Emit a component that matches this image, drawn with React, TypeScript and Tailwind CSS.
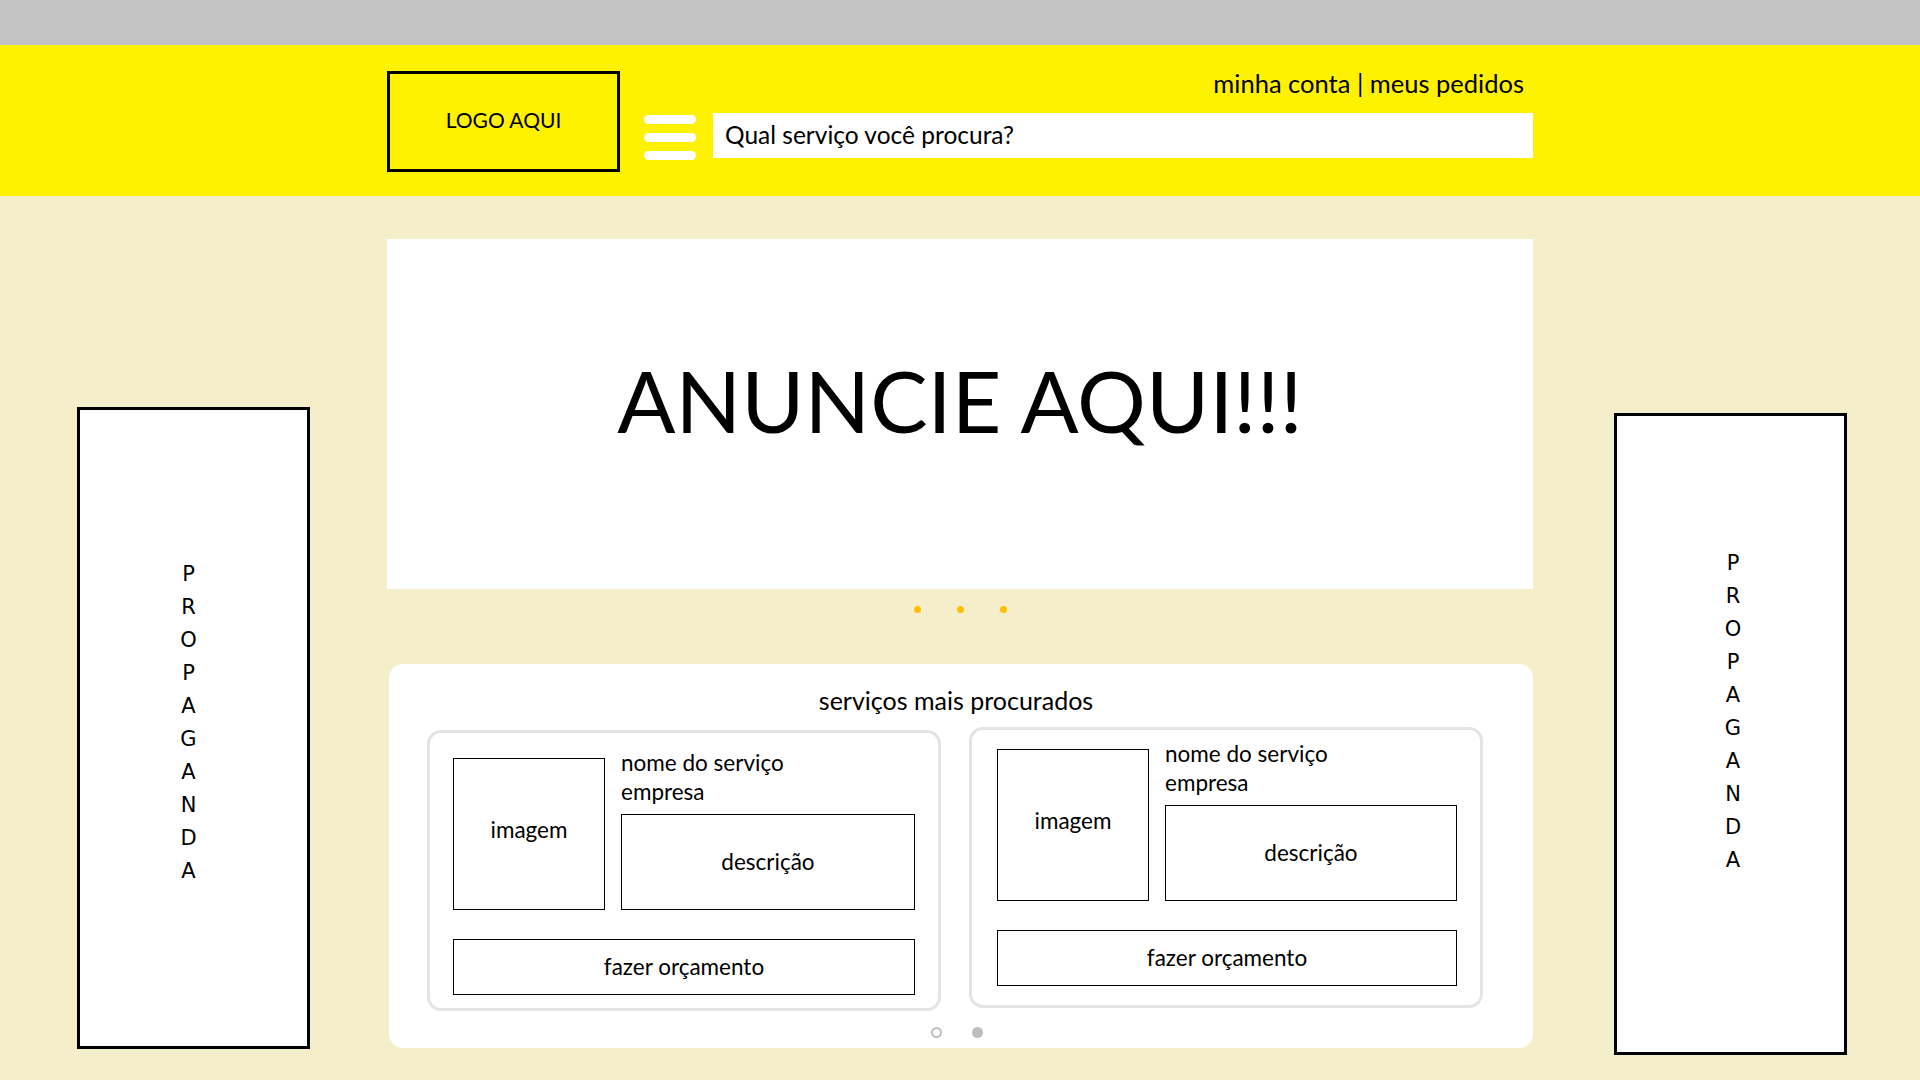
import React from "react";

const font = { fontFamily: "Lato, 'Open Sans', sans-serif" };

function AdColumn({ className, inner }: { className: string; inner: string }) {
  return (
    <div className={`w-[233px] h-[642px] bg-white border-[3px] border-black flex items-center justify-center ${className}`}>
      <div className={`flex flex-col items-center text-[21px] leading-[33px] text-black ${inner}`} style={{ fontFamily: "'DejaVu Sans', Verdana, sans-serif" }}>
        {"PROPAGANDA".split("").map((c, i) => (
          <span key={i}>{c}</span>
        ))}
      </div>
    </div>
  );
}

function ServiceCard({ className }: { className: string }) {
  return (
    <div className={`w-[514px] h-[281px] rounded-[14px] border-[3px] border-[#e4e4e4] bg-white pr-[23px] text-[22.5px] ${className}`}>
      <div className="flex gap-[16px]">
        <div className="w-[152px] h-[152px] border border-black flex items-center justify-center pb-[8px]">
          imagem
        </div>
        <div className="flex-1 flex flex-col">
          <div className="leading-[29px] -mt-[10px]">nome do serviço</div>
          <div className="leading-[29px]">empresa</div>
          <div className="mt-[8px] h-[96px] border border-black flex items-center justify-center">
            descrição
          </div>
        </div>
      </div>
      <div className="mt-[29px] h-[56px] border border-black flex items-center justify-center">
        fazer orçamento
      </div>
    </div>
  );
}

export default function App() {
  return (
    <div className="w-[1920px] h-[1080px] bg-[#f5eecb] text-black overflow-hidden" style={font}>
      <div className="h-[45px] bg-[#c3c3c3]" />
      <header className="h-[151px] bg-[#fff200] flex">
        <div className="ml-[387px] w-[1146px] flex pt-[26px]">
          <div className="w-[233px] h-[101px] border-[3px] border-black flex items-center justify-center pb-[4px] text-[21px]">
            LOGO AQUI
          </div>
          <div className="ml-[24px] mt-[44px] flex flex-col gap-[9px]">
            <span className="block w-[52px] h-[9px] rounded-full bg-white" />
            <span className="block w-[52px] h-[9px] rounded-full bg-white" />
            <span className="block w-[52px] h-[9px] rounded-full bg-white" />
          </div>
          <div className="ml-[17px] flex-1 flex flex-col">
            <div className="self-end mr-[9px] h-[26px] flex items-center text-[25.5px] leading-none">
              minha conta | meus pedidos
            </div>
            <div className="mt-[16px] h-[45px] bg-white flex items-center px-[12px] text-[24.5px]">
              Qual serviço você procura?
            </div>
          </div>
        </div>
      </header>
      <div className="flex items-start">
        <AdColumn className="ml-[77px] mt-[211px]" inner="pb-[11px] pr-[10px]" />
        <main className="ml-[77px] w-[1146px] flex flex-col pt-[43px]">
          <div className="h-[350px] bg-white flex items-center justify-center pb-[28px]">
            <span className="text-[86px] leading-none">ANUNCIE AQUI!!!</span>
          </div>
          <div className="h-[40px] flex items-center justify-center gap-[36px]">
            <span className="w-[7px] h-[7px] rounded-full bg-[#ffc000]" />
            <span className="w-[7px] h-[7px] rounded-full bg-[#ffc000]" />
            <span className="w-[7px] h-[7px] rounded-full bg-[#ffc000]" />
          </div>
          <section className="mt-[35px] ml-[2px] h-[384px] rounded-[14px] bg-white flex flex-col">
            <h2 className="text-center text-[25px] leading-none pt-[24px] -ml-[10px] h-[66px]">serviços mais procurados</h2>
            <div className="flex items-start pl-[38px] gap-[28px]">
              <ServiceCard className="pt-[25px] pl-[23px]" />
              <ServiceCard className="pt-[19px] pl-[25px] -mt-[3px]" />
            </div>
            <div className="flex justify-center gap-[30px] mt-[16px] -ml-[8px]">
              <span className="w-[11px] h-[11px] rounded-full border-[2px] border-[#bdbdbd]" />
              <span className="w-[11px] h-[11px] rounded-full bg-[#bdbdbd]" />
            </div>
          </section>
        </main>
        <AdColumn className="ml-[81px] mt-[217px]" inner="pb-[44px] pl-[5px]" />
      </div>
    </div>
  );
}
